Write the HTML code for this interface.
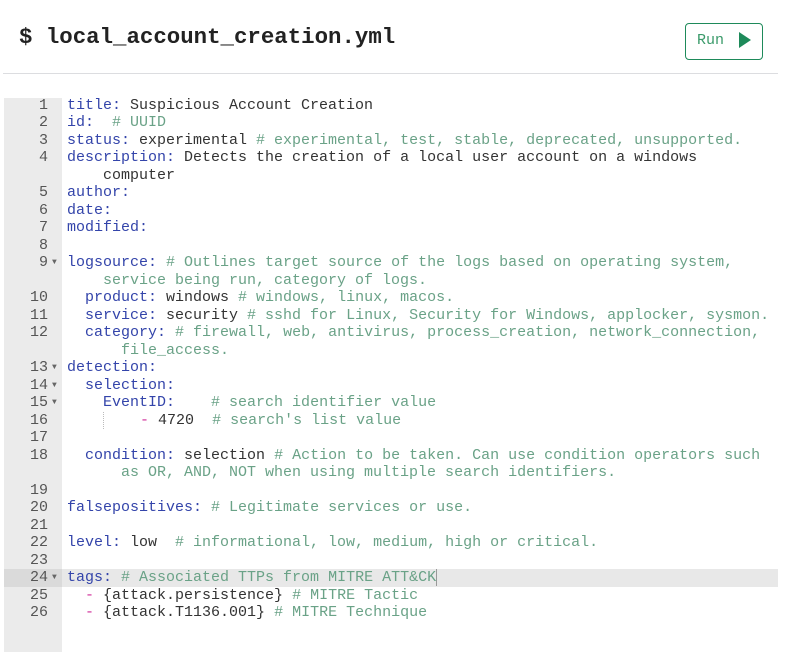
<!DOCTYPE html>
<html><head><meta charset="utf-8"><style>
body{margin:0;width:791px;height:652px;background:#fff;overflow:hidden;position:relative;font-family:"Liberation Mono",monospace}
h1{position:absolute;left:19px;top:22px;margin:0;font-size:22.4px;font-weight:bold;color:#222;line-height:30px;white-space:pre}
.hr{position:absolute;left:3px;top:73px;width:775px;height:1px;background:#dcdde0}
.run{position:absolute;left:685px;top:23px;width:78px;height:37px;border:1px solid #1e8a5a;border-radius:4px;box-sizing:border-box;color:#3a9a6a;font-size:15px;font-family:"Liberation Mono",monospace}
.run span{position:absolute;left:11px;top:8px}
.run i{position:absolute;left:53px;top:8px;width:0;height:0;border-left:12px solid #1e8a5a;border-top:8px solid transparent;border-bottom:8px solid transparent}
.gut{position:absolute;left:4px;top:98px;width:58px;height:554px;background:#ebebeb}
.ed{position:absolute;left:0;top:96.5px;width:791px}
.r{height:17.5px;line-height:17.5px;position:relative;font-size:15px;white-space:pre;color:#333}
.n{position:absolute;left:4px;width:44px;text-align:right;color:#555}
.f{position:absolute;left:52px;top:0;font-size:8px;color:#666}
.c{position:absolute;left:67px}
.k{color:#3344aa}.m{color:#6aa287}.d{color:#d0309a}
.hl{background:#e8e8e8;width:774px;left:4px}
.hl .hg{position:absolute;left:0;top:0;width:58px;height:17.5px;background:#dadada}
</style></head><body>
<h1>$ local_account_creation.yml</h1>
<div class="run"><span>Run</span><i></i></div>
<div class="hr"></div>
<div class="gut"></div>
<div class="ed">
<div class="r"><span class="n">1</span><span class="c"><span class="k">title:</span> Suspicious Account Creation</span></div>
<div class="r"><span class="n">2</span><span class="c"><span class="k">id:</span>  <span class="m"># UUID</span></span></div>
<div class="r"><span class="n">3</span><span class="c"><span class="k">status:</span> experimental <span class="m"># experimental, test, stable, deprecated, unsupported.</span></span></div>
<div class="r"><span class="n">4</span><span class="c"><span class="k">description:</span> Detects the creation of a local user account on a windows</span></div>
<div class="r"><span class="c">    computer</span></div>
<div class="r"><span class="n">5</span><span class="c"><span class="k">author:</span></span></div>
<div class="r"><span class="n">6</span><span class="c"><span class="k">date:</span></span></div>
<div class="r"><span class="n">7</span><span class="c"><span class="k">modified:</span></span></div>
<div class="r"><span class="n">8</span></div>
<div class="r"><span class="n">9</span><span class="f">▼</span><span class="c"><span class="k">logsource:</span> <span class="m"># Outlines target source of the logs based on operating system,</span></span></div>
<div class="r"><span class="c"><span class="m">    service being run, category of logs.</span></span></div>
<div class="r"><span class="n">10</span><span class="c">  <span class="k">product:</span> windows <span class="m"># windows, linux, macos.</span></span></div>
<div class="r"><span class="n">11</span><span class="c">  <span class="k">service:</span> security <span class="m"># sshd for Linux, Security for Windows, applocker, sysmon.</span></span></div>
<div class="r"><span class="n">12</span><span class="c">  <span class="k">category:</span> <span class="m"># firewall, web, antivirus, process_creation, network_connection,</span></span></div>
<div class="r"><span class="c"><span class="m">      file_access.</span></span></div>
<div class="r"><span class="n">13</span><span class="f">▼</span><span class="c"><span class="k">detection:</span></span></div>
<div class="r"><span class="n">14</span><span class="f">▼</span><span class="c">  <span class="k">selection:</span></span></div>
<div class="r"><span class="n">15</span><span class="f">▼</span><span class="c">    <span class="k">EventID:</span>    <span class="m"># search identifier value</span></span></div>
<div class="r"><span class="n">16</span><span class="c">    <span style="border-left:1px dotted #bbb">    </span><span class="d">-</span> 4720  <span class="m"># search's list value</span></span></div>
<div class="r"><span class="n">17</span></div>
<div class="r"><span class="n">18</span><span class="c">  <span class="k">condition:</span> selection <span class="m"># Action to be taken. Can use condition operators such</span></span></div>
<div class="r"><span class="c"><span class="m">      as OR, AND, NOT when using multiple search identifiers.</span></span></div>
<div class="r"><span class="n">19</span></div>
<div class="r"><span class="n">20</span><span class="c"><span class="k">falsepositives:</span> <span class="m"># Legitimate services or use.</span></span></div>
<div class="r"><span class="n">21</span></div>
<div class="r"><span class="n">22</span><span class="c"><span class="k">level:</span> low  <span class="m"># informational, low, medium, high or critical.</span></span></div>
<div class="r"><span class="n">23</span></div>
<div class="r"><div class="hl" style="position:absolute;top:0;height:17.5px"><div class="hg"></div></div><span class="n">24</span><span class="f">▼</span><span class="c"><span class="k">tags:</span> <span class="m"># Associated TTPs from MITRE ATT&amp;CK</span><span style="border-left:1px solid #999"></span></span></div>
<div class="r"><span class="n">25</span><span class="c">  <span class="d">-</span> {attack.persistence} <span class="m"># MITRE Tactic</span></span></div>
<div class="r"><span class="n">26</span><span class="c">  <span class="d">-</span> {attack.T1136.001} <span class="m"># MITRE Technique</span></span></div>
</div>
</body></html>
